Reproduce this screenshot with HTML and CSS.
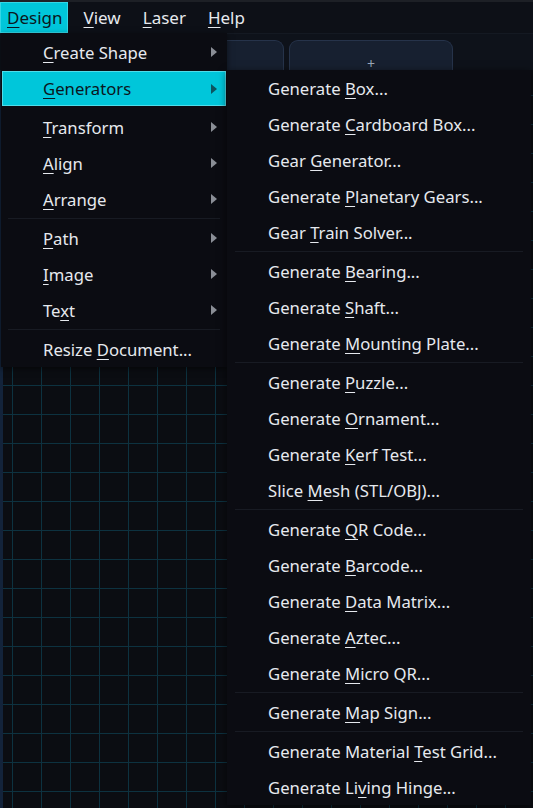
FILE: index.html
```html
<!DOCTYPE html>
<html>
<head>
<meta charset="utf-8">
<link rel="stylesheet" href="styles.css">
</head>
<body>
<div class="app">
  <div class="menubar">
    <div class="mb-item active"><u>D</u>esign</div>
    <div class="mb-item"><u>V</u>iew</div>
    <div class="mb-item"><u>L</u>aser</div>
    <div class="mb-item"><u>H</u>elp</div>
  </div>
  <div class="tabstrip">
    <div class="tab tab-doc"></div>
    <div class="tab tab-add">+</div>
  </div>
  <div class="workspace">
    <div class="canvas"></div>
  </div>

  <div class="menu main-menu">
    <div class="mi"><span><u>C</u>reate Shape</span><i class="arrow"></i></div>
    <div class="mi hl"><span><u>G</u>enerators</span><i class="arrow"></i></div>
    <div class="sep blank"></div>
    <div class="mi"><span><u>T</u>ransform</span><i class="arrow"></i></div>
    <div class="mi"><span><u>A</u>lign</span><i class="arrow"></i></div>
    <div class="mi"><span><u>A</u>rrange</span><i class="arrow"></i></div>
    <div class="sep"></div>
    <div class="mi"><span><u>P</u>ath</span><i class="arrow"></i></div>
    <div class="mi"><span><u>I</u>mage</span><i class="arrow"></i></div>
    <div class="mi"><span>Te<u>x</u>t</span><i class="arrow"></i></div>
    <div class="sep"></div>
    <div class="mi"><span>Resize <u>D</u>ocument...</span></div>
  </div>

  <div class="menu sub-menu">
    <div class="mi"><span>Generate <u>B</u>ox...</span></div>
    <div class="mi"><span>Generate <u>C</u>ardboard Box...</span></div>
    <div class="mi"><span>Gear <u>G</u>enerator...</span></div>
    <div class="mi"><span>Generate <u>P</u>lanetary Gears...</span></div>
    <div class="mi"><span>Gear <u>T</u>rain Solver...</span></div>
    <div class="sep"></div>
    <div class="mi"><span>Generate <u>B</u>earing...</span></div>
    <div class="mi"><span>Generate <u>S</u>haft...</span></div>
    <div class="mi"><span>Generate <u>M</u>ounting Plate...</span></div>
    <div class="sep"></div>
    <div class="mi"><span>Generate <u>P</u>uzzle...</span></div>
    <div class="mi"><span>Generate <u>O</u>rnament...</span></div>
    <div class="mi"><span>Generate <u>K</u>erf Test...</span></div>
    <div class="mi"><span>Slice <u>M</u>esh (STL/OBJ)...</span></div>
    <div class="sep"></div>
    <div class="mi"><span>Generate <u>Q</u>R Code...</span></div>
    <div class="mi"><span>Generate <u>B</u>arcode...</span></div>
    <div class="mi"><span>Generate <u>D</u>ata Matrix...</span></div>
    <div class="mi"><span>Generate <u>A</u>ztec...</span></div>
    <div class="mi"><span>Generate <u>M</u>icro QR...</span></div>
    <div class="sep"></div>
    <div class="mi"><span>Generate <u>M</u>ap Sign...</span></div>
    <div class="sep"></div>
    <div class="mi"><span>Generate Material <u>T</u>est Grid...</span></div>
    <div class="mi"><span>Generate Li<u>v</u>ing Hinge...</span></div>
  </div>
</div>
</body>
</html>
```

FILE: styles.css
```css
html, body {
  margin: 0;
  padding: 0;
  background: #0b0c12;
  width: 533px;
  height: 808px;
  overflow: hidden;
}
body {
  font-family: "Noto Sans", "Open Sans", sans-serif;
  font-size: 16.7px;
  color: #e6e9ee;
}
u {
  text-decoration: underline;
  text-decoration-thickness: 1px;
  text-underline-offset: 3px;
}
.app {
  position: relative;
  display: flex;
  flex-direction: column;
  height: 808px;
}
.menubar {
  height: 33px;
  flex: none;
  display: flex;
  align-items: stretch;
  background: #0d1017;
  border-top: 2px solid #1d2026;
  box-sizing: border-box;
}
.mb-item {
  display: flex;
  align-items: center;
  padding: 0 6px 1px 6px;
  margin-left: 10px;
  color: #e6e9ee;
  line-height: 1;
  font-size: 17px;
}
.mb-item.active {
  background: #00c6da;
  color: #0b1620;
  padding: 0 5px 1px 7px;
  margin-left: 0;
  box-shadow: inset 0 0 0 1px #33d6e6;
}
.tabstrip {
  height: 37px;
  flex: none;
  display: flex;
  align-items: flex-end;
  gap: 5px;
  background: #0e121a;
  border-top: 1px solid #141922;
  box-sizing: border-box;
  padding-left: 120px;
}
.tab {
  height: 30px;
  border: 1px solid #26334a;
  border-bottom: none;
  border-radius: 9px 9px 0 0;
  background: #172030;
  box-sizing: border-box;
}
.tab-doc {
  width: 164px;
}
.tab-add {
  width: 164px;
  color: #9aa6b8;
  font-size: 14px;
  text-align: center;
  line-height: 14px;
  padding-top: 16px;
}
.workspace {
  flex: 1;
  position: relative;
  background: #0b0d12;
}
.canvas {
  position: absolute;
  inset: 0;
  border-left: 3px solid #13233a;
  background-color: #0b0d12;
  background-image:
    linear-gradient(to right, #0d3240 1px, transparent 1px),
    linear-gradient(to bottom, #0d3240 1px, transparent 1px);
  background-size: 29px 29px;
  background-position: 9px 25px;
}
.menu {
  position: absolute;
  background: #0b0c12;
  box-sizing: border-box;
}
.main-menu {
  left: 1px;
  top: 33px;
  width: 226px;
  padding: 1px 1px 0 1px;
  box-shadow: 0 2px 6px rgba(0,0,0,0.5);
}
.sub-menu {
  left: 227px;
  top: 70px;
  width: 304px;
  padding: 0 2px;
  height: 735px;
  box-shadow: 0 2px 8px rgba(0,0,0,0.6);
}
.mi {
  height: 36px;
  display: flex;
  align-items: center;
  justify-content: space-between;
  padding: 0 9px 0 41px;
  box-sizing: border-box;
  white-space: nowrap;
}
.sub-menu .mi {
  padding-left: 39px;
}
.mi.hl {
  background: #00c6da;
  color: #0b1620;
  box-shadow: inset 0 0 0 1px #4fdcea;
  height: 35px;
  margin-top: 1px;
}
.arrow {
  width: 0;
  height: 0;
  border-top: 5px solid transparent;
  border-bottom: 5px solid transparent;
  border-left: 6px solid #8a8e96;
}
.mi.hl .arrow {
  border-left-color: #0c5560;
}
.sep {
  height: 3px;
  position: relative;
}
.sep::after {
  content: "";
  position: absolute;
  left: 6px;
  right: 6px;
  top: 1px;
  height: 1px;
  background: #181b23;
}
.sep.blank::after {
  display: none;
}
```
